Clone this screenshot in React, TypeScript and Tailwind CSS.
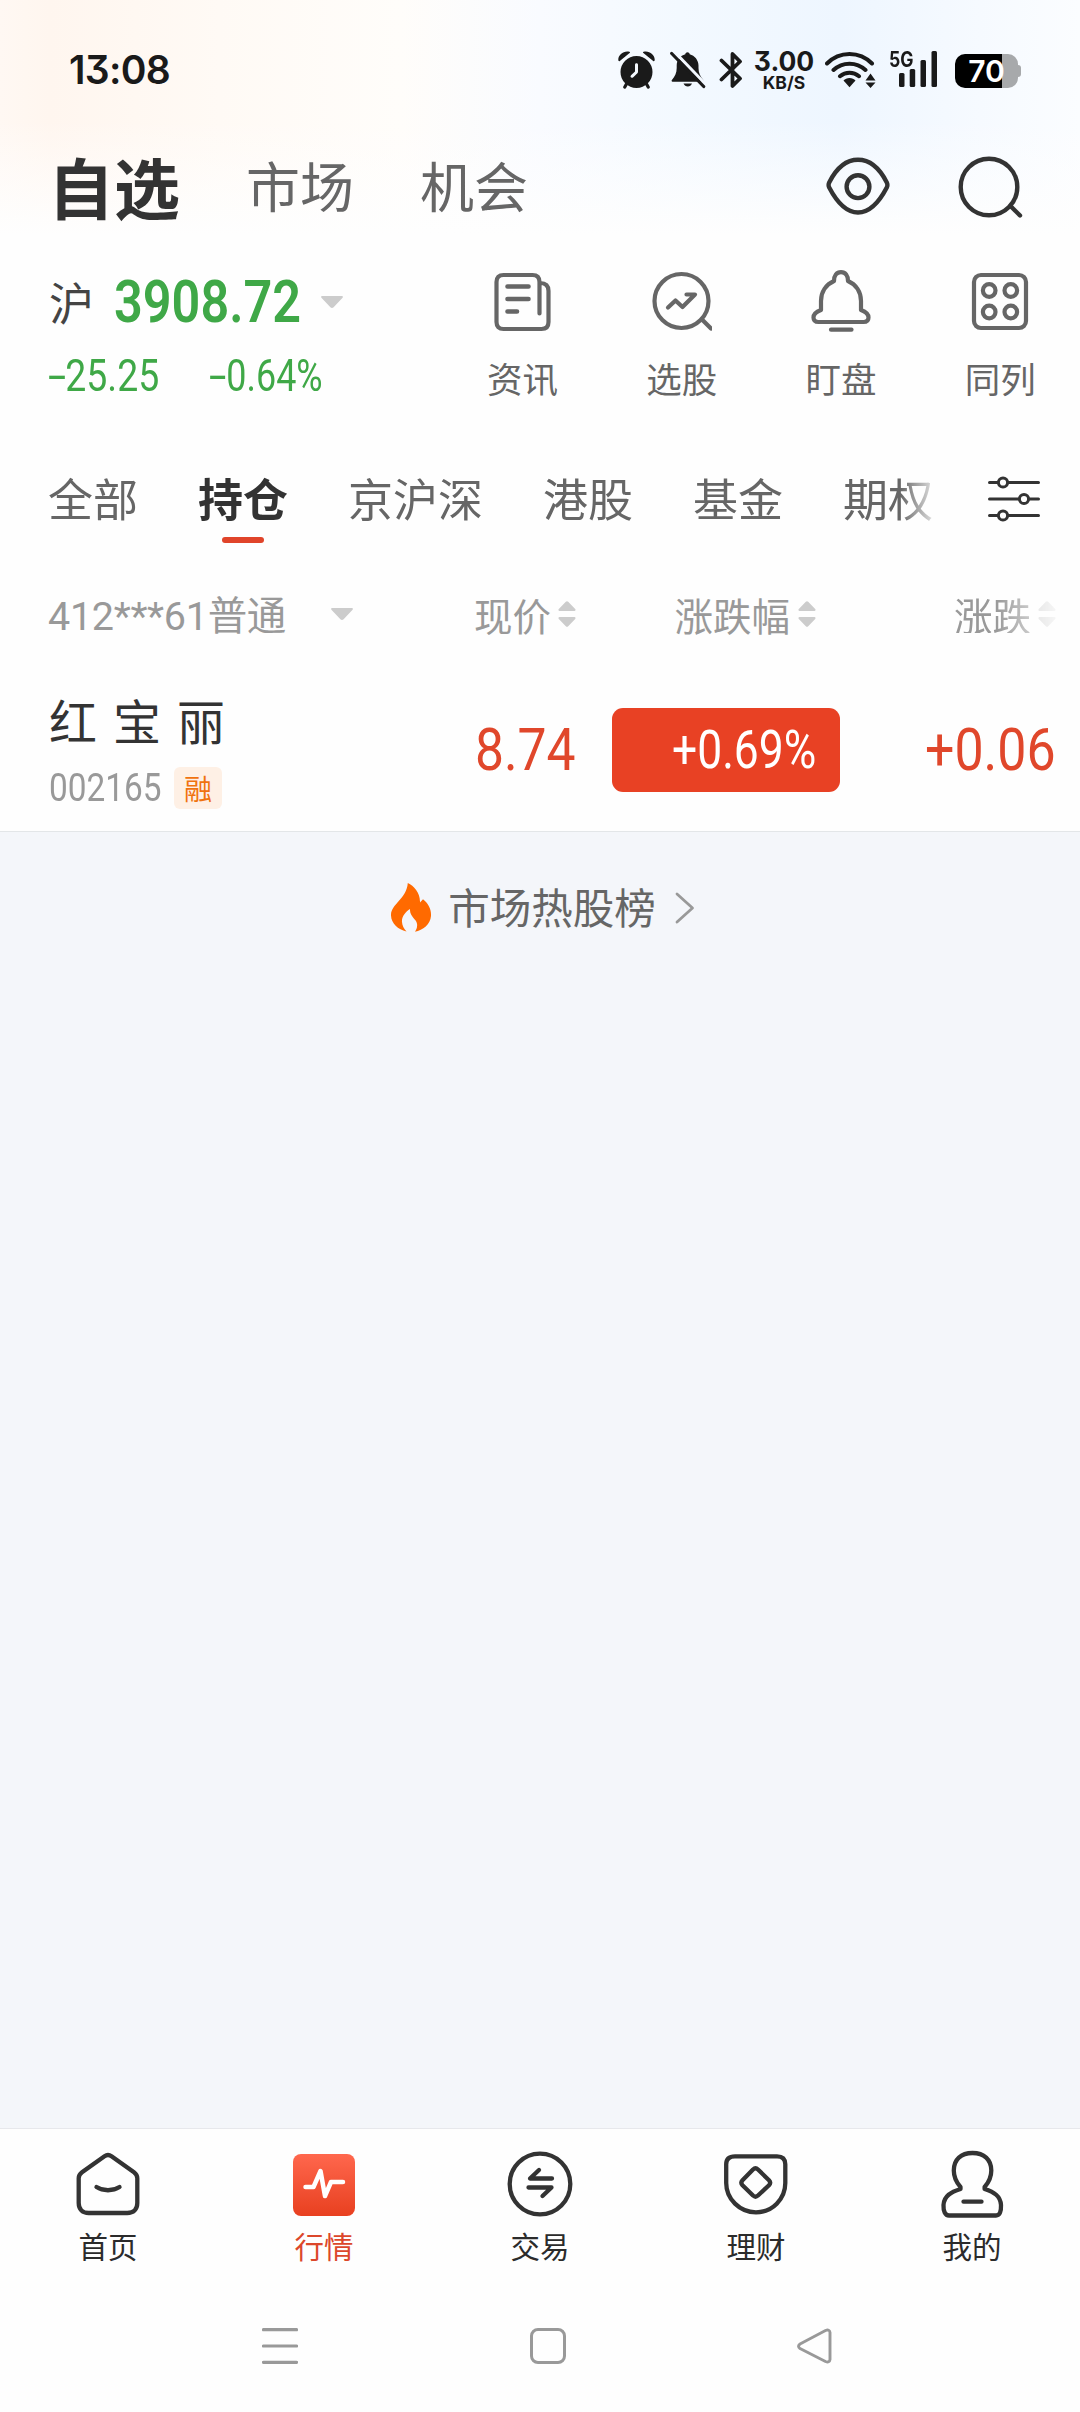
import type { ReactNode } from "react";

/* Narrow numerals: a fixed-width slot with horizontally condensed digits. */
function Num({ slot, text, children }: { slot: string; text: string; children: ReactNode }) {
  return (
    <span className={`block shrink-0 font-[Roboto,sans-serif] whitespace-nowrap leading-none ${slot}`}>
      <span className={`inline-block origin-left ${text}`}>{children}</span>
    </span>
  );
}

function Caret() {
  return (
    <svg width="22" height="12" viewBox="0 0 22 12" fill="#ccc">
      <path d="M1.2 0h19.6c1 0 1.4 1 .8 1.700l-9 9.500c-.9 1-2.300 1-3.200 0l-9-9.500C-.2 1 .2 0 1.200 0z" />
    </svg>
  );
}

function Sort() {
  return (
    <svg width="18" height="26" viewBox="0 0 18 26" fill="#ccc">
      <path d="M1.500 10h15c1 0 1.400-1.200.7-1.900l-7-7.300c-.7-.7-1.700-.7-2.400 0l-7 7.300C.1 8.800.5 10 1.500 10z" />
      <path d="M1.500 16h15c1 0 1.400 1.200.7 1.900l-7 7.300c-.7.7-1.700.7-2.400 0l-7-7.300c-.7-.7-.3-1.900.7-1.900z" />
    </svg>
  );
}

function StatusBar() {
  return (
    <div className="flex h-[120px] items-start pt-[50px] text-[#1a1a1a]">
      <div className="ml-[69px] w-[549px] font-[Inter,sans-serif] text-[39px] leading-[39px] font-semibold tracking-[-0.7px] [font-feature-settings:'cv09']">
        13:08
      </div>
      <svg className="mt-px" width="38" height="38" viewBox="0 0 38 38" fill="#1a1a1a">
        <path fillRule="evenodd" d="M18.500 5a16 16 0 1 1 0 32 16 16 0 0 1 0-32zm0 7.300c-1 0-1.500.6-1.500 1.500v6.700l-4 3.700c-1.400 1.500.5 3.500 2 2.200l4.400-4.200c.5-.5.6-.8.6-1.400v-7c0-.9-.6-1.500-1.500-1.500z" />
        <path d="M.4 9.500C-.6 4.500 5.500-.8 11.400.8c.8.200.8.900.2 1.300L1.800 9.900c-.6.4-1.200.3-1.400-.4zM36.600 9.500c1-5-5.100-10.300-11-8.700-.8.200-.8.900-.2 1.300l9.800 7.800c.6.400 1.200.3 1.400-.4z" />
        <path d="M9 32l-2.200 4M28 32l2.200 4" stroke="#1a1a1a" strokeWidth="3.200" strokeLinecap="round" />
      </svg>
      <svg className="mt-px ml-[14px]" width="36" height="38" viewBox="0 0 36 38">
        <path
          fill="#1a1a1a"
          d="M2.500 30.700c-.9 0-1.200-1-.6-1.700C5 25.500 6.700 22 6.700 17v-2.500c0-5.500 3.700-10 8.600-11.300C15.600 2 16.400 1.300 17.500 1.300s1.900.7 2.200 1.900c4.900 1.300 8.800 5.800 8.800 11.300V17c0 5 1.700 8.500 4.800 12 .6.7.3 1.700-.6 1.700z"
        />
        <path fill="#1a1a1a" d="M13.500 32.500h8.500c-.8 2-2.300 3-4.200 3s-3.500-1-4.300-3z" />
        <path d="M4.300 0.700L36 33.700" stroke="#f3f8ff" strokeWidth="3.200" />
        <path d="M1.700 2.500l32 33" stroke="#1a1a1a" strokeWidth="3.200" strokeLinecap="round" />
      </svg>
      <svg className="mt-px ml-[13px]" width="26" height="38" viewBox="0 0 26 38" fill="none" stroke="#1a1a1a" strokeWidth="3.800" strokeLinejoin="round" strokeLinecap="round">
        <path d="M2.500 9.500L21 27.500 13.500 35V3L21 10.500 2.500 28.500" />
      </svg>
      <div className="ml-[9px] flex w-[60px] flex-col items-center font-[Inter,sans-serif] leading-none [font-feature-settings:'cv09']">
        <div className="text-[26.500px] leading-[22px] font-bold">3.00</div>
        <div className="mt-[2px] text-[17.500px] leading-[17px] font-bold">KB/S</div>
      </div>
      <svg className="mt-px ml-[11px]" width="51" height="38" viewBox="0 0 51 38" fill="none" stroke="#1a1a1a" strokeWidth="4" strokeLinecap="round">
        <path d="M2 12.500c12.500-12.700 32.500-12.700 45 0M8.500 19c9-8.500 23-8.500 32 0M15 25.200c5.500-4.700 13.500-4.700 19 0" />
        <path d="M24.500 27c2.500 0 4.500 1 6 2.500l-6 6.700-6-6.700c1.500-1.500 3.500-2.500 6-2.500z" fill="#1a1a1a" stroke="none" />
        <path d="M45.500 22.500l5 7H40.500zM45.500 37l-5-5.500h10z" fill="#1a1a1a" stroke="none" />
      </svg>
      <div className="ml-[13px] w-[50px]">
        <div className="flex h-[38px] items-end pl-[10px] pb-px">
          <svg className="mt-px" width="39" height="36" viewBox="0 0 39 36" fill="#1a1a1a">
            <rect x="0" y="22" width="5.500" height="14" rx="1.500" />
            <rect x="10.700" y="18" width="5.500" height="18" rx="1.500" />
            <rect x="21.500" y="9" width="5.500" height="27" rx="1.500" />
            <rect x="32.500" y="0" width="5.500" height="36" rx="1.500" />
          </svg>
        </div>
        <div className="-mt-[38px] h-[38px] origin-left scale-x-[0.84] pt-px font-[Inter,sans-serif] text-[21px] leading-[17px] font-bold">5G</div>
      </div>
      <div className="mt-[4px] ml-[16px] flex items-center">
        <div className="flex h-[34px] w-[63px] items-center justify-center rounded-[10px] bg-[linear-gradient(to_right,#000_0,#000_47px,#a7a9ab_47px)] font-[Inter,sans-serif] text-[30px] leading-none font-semibold text-white">
          70
        </div>
        <div className="h-[12px] w-[3px] rounded-r-[3px] bg-[#a7a9ab]" />
      </div>
    </div>
  );
}

function Header() {
  return (
    <div className="flex h-[133px] items-center pl-[48px]">
      <div className="flex h-[133px] w-[778px] items-center gap-[66px] pb-[3px] text-[54px] leading-none text-[#666]">
        <span className="text-[66px] font-bold text-[#333]">自选</span>
        <span>市场</span>
        <span>机会</span>
      </div>
      <svg width="64" height="60" viewBox="0 0 64 60" fill="none" stroke="#333" strokeWidth="4.400">
        <path d="M3.200 25.500C10 12 19.500 2.800 32 2.800S54 12 60.800 25.500c.9 1.900.9 3.200 0 5C54 43.500 44.500 55.500 32 55.500S10 43.500 3.200 30.500c-.9-1.800-.9-3.100 0-5z" />
        <circle cx="32" cy="29.700" r="11.400" />
      </svg>
      <svg className="ml-[67px]" width="66" height="62" viewBox="0 0 66 62" fill="none" stroke="#333" strokeWidth="4.400" strokeLinecap="round">
        <circle cx="32" cy="31" r="28.300" />
        <path d="M53.500 50l9.500 9.500" />
      </svg>
    </div>
  );
}

const quick: { label: string; icon: ReactNode }[] = [
  {
    label: "资讯",
    icon: (
      <>
        <path d="M47 13c6 0 8.500 3 8.500 8v31c0 4.500-2.500 7-7 7H10.500c-4.500 0-7-2.500-7-7V12c0-4.500 2.500-7 7-7h29c4.500 0 7 2.500 7 7v31.500" />
        <path d="M14.500 16.500h21M14.500 29h21M14.500 41.500h9.500" strokeWidth="4.600" />
      </>
    ),
  },
  {
    label: "选股",
    icon: (
      <>
        <circle cx="29.500" cy="31" r="27" />
        <path d="M50 49.500l9 9" />
        <path d="M16 37.500l7.500-7 7 6.500 12.500-12.500H34.500" strokeLinejoin="round" />
      </>
    ),
  },
  {
    label: "盯盘",
    icon: (
      <>
        <path d="M23 11c0-5.500 2.500-8.800 7-8.800s7 3.300 7 8.800c8 3.500 13 11 13 20v9c5 1.800 7.500 4.500 7.500 7.500s-2 4.500-5 4.500h-45c-3 0-5-1.500-5-4.500s2.500-5.700 7.500-7.500v-9c0-9 5-16.500 13-20z" strokeLinejoin="round" />
        <path d="M20 59.700h20.500" />
      </>
    ),
  },
  {
    label: "同列",
    icon: (
      <>
        <rect x="4" y="5" width="52" height="53" rx="7" />
        <circle cx="19.200" cy="20.500" r="6.300" />
        <circle cx="40.800" cy="20.500" r="6.300" />
        <circle cx="19.200" cy="42" r="6.300" />
        <circle cx="40.800" cy="42" r="6.300" />
      </>
    ),
  },
];

function IndexBar() {
  return (
    <div className="flex h-[186px]">
      <div className="w-[443px] shrink-0 pl-[49px]">
        <div className="flex h-[98px] items-center">
          <span className="w-[65px] pb-[2px] text-[45px] leading-none text-[#444]">沪</span>
          <Num slot="w-[207px] text-[60px] text-[#3fa847] font-semibold" text="scale-x-[0.84]">3908.72</Num>
          <Caret />
        </div>
        <div className="-ml-px mt-[4px] flex items-center text-[#3fa847]">
          <Num slot="w-[161px] text-[43.500px] font-[450]" text="scale-x-[0.86]">
            <span className="mr-[8px] inline-block origin-left scale-x-[1.75]">-</span>25.25
          </Num>
          <Num slot="w-[130px] text-[43.500px] font-[450]" text="scale-x-[0.825]">
            <span className="mr-[9px] inline-block origin-left scale-x-[1.75]">-</span>0.64%
          </Num>
        </div>
      </div>
      <div className="grid w-[637px] grid-cols-4">
        {quick.map((q) => (
          <div key={q.label} className="flex flex-col items-center pt-[17px]">
            <svg width="60" height="64" viewBox="0 0 60 64" fill="none" stroke="#666" strokeWidth="4.200" strokeLinecap="round">
              {q.icon}
            </svg>
            <span className="mt-[26px] text-[35.500px] leading-none text-[#666]">{q.label}</span>
          </div>
        ))}
      </div>
    </div>
  );
}

function Tabs() {
  const tabs = ["全部", "持仓", "京沪深", "港股", "基金", "期权"];
  return (
    <div className="flex h-[120px] items-center">
      <div className="flex h-[120px] w-[940px] shrink-0 items-center gap-[60px] overflow-hidden pb-[2px] pl-[48px] text-[45px] leading-[60px] whitespace-nowrap text-[#666] [mask-image:linear-gradient(to_right,#000_900px,transparent_942px)]">
        {tabs.map((t) =>
          t === "持仓" ? (
            <span key={t} className="relative font-bold text-[#333]">
              {t}
              <i className="absolute top-[69px] left-[24px] h-[6px] w-[42px] rounded-full bg-[#e0442a]" />
            </span>
          ) : (
            <span key={t}>{t}</span>
          ),
        )}
      </div>
      <svg className="ml-[48px]" width="52" height="48" viewBox="0 0 52 48" fill="#fefefe" stroke="#333" strokeWidth="3" strokeLinecap="round">
        <path d="M1.500 7.500h49M1.500 24h49M1.500 40.500h49" />
        <circle cx="15" cy="7.500" r="4.600" />
        <circle cx="36" cy="24" r="4.600" />
        <circle cx="15" cy="40.500" r="4.600" />
      </svg>
    </div>
  );
}

function Columns() {
  return (
    <div className="flex h-[107px] items-center pt-[3px] text-[38.500px] leading-none text-[#999]">
      <div className="flex w-[283px] items-center pt-[5px] pl-[48px] whitespace-nowrap">
        <span className="font-[Roboto,'Noto_Sans_CJK_SC',sans-serif] text-[39.500px] tracking-[-0.3px]">412***61普通</span>
      </div>
      <div className="ml-[48px]"><Caret /></div>
      <div className="flex w-[223px] items-center justify-end gap-[7px]">现价<Sort /></div>
      <div className="flex w-[240px] items-center justify-end gap-[8px]">涨跌幅<Sort /></div>
      <div className="flex w-[240px] items-center justify-end gap-[7px] [mask-image:linear-gradient(to_right,#000_180px,transparent_252px)]">
        涨跌<Sort />
      </div>
    </div>
  );
}

function StockRow() {
  return (
    <div className="flex h-[166px] items-center border-b border-[#e3e6e8] pt-[2px]">
      <div className="w-[475px] pt-[2px] pl-[49px]">
        <div className="text-[48px] leading-[54px] tracking-[16px] text-[#333]">红宝丽</div>
        <div className="mt-[21px] flex items-center">
          <Num slot="w-[125px] text-[39.500px] text-[#999]" text="scale-x-[0.845]">002165</Num>
          <span className="flex h-[42px] w-[48px] items-center justify-center rounded-[6px] bg-[#fef0e5] pb-px text-[28px] leading-none text-[#f0730f]">融</span>
        </div>
      </div>
      <Num slot="w-[137px] text-[60px] font-[450] text-[#e0472b]" text="scale-x-[0.86]">8.74</Num>
      <div className="flex h-[84px] w-[228px] items-center rounded-[11px] bg-[#e84124] pl-[60px] text-white">
        <Num slot="w-[150px] text-[53.500px] font-[450]" text="scale-x-[0.83]">+0.69%</Num>
      </div>
      <Num slot="ml-[85px] w-[130px] text-[60px] font-[450] text-[#e0472b]" text="scale-x-[0.865]">+0.06</Num>
    </div>
  );
}

function HotList() {
  return (
    <div className="flex flex-1 justify-center bg-[#f4f6fa] pt-[50px] pl-[6px]">
      <div className="flex h-[52px] items-center">
        <svg className="mb-px" width="41" height="49" viewBox="0 0 41 49" fill="#ff6a00">
          <path d="M16.800 0C23 3 29.300 9.500 29 19.500l3-3.300C37 20 40.500 26 40 33c-.6 8-8 14.500-16 15.700 1.500-2.500 2.500-4.500 2-8-.6-4.700-7.500-7-7-14.700-4.500 3-8.500 7.500-8 13 .2 3.500 1.800 6.800 4.500 9.500C7 46.500.3 40.500 0 32.500-.3 21 15.500 16.500 16.800 0z" />
        </svg>
        <span className="ml-[16px] pb-[2px] text-[41.500px] leading-none text-[#666]">市场热股榜</span>
        <svg className="ml-[19px]" width="20" height="32" viewBox="0 0 20 32" fill="none" stroke="#999" strokeWidth="2.800" strokeLinecap="round" strokeLinejoin="round">
          <path d="M2 2l15.500 14L2 30" />
        </svg>
      </div>
    </div>
  );
}

const nav: { label: string; icon: ReactNode }[] = [
  {
    label: "首页",
    icon: (
      <>
        <path d="M30.500 8.300c2.300-1.700 4.700-1.700 7 0l22.500 16c2.300 1.700 3.300 3.500 3.300 6V55c0 6.500-4 10-10 10H14.700c-6 0-10-3.500-10-10V30.300c0-2.500 1-4.300 3.300-6z" />
        <path d="M22.500 39c6.500 4.300 16.500 4.300 23 0" />
      </>
    ),
  },
  {
    label: "行情",
    icon: (
      <>
        <defs>
          <linearGradient id="pulse" x1="0" y1="0" x2="0" y2="1">
            <stop offset="0" stopColor="#ff674d" />
            <stop offset="1" stopColor="#e84020" />
          </linearGradient>
        </defs>
        <rect x="3" y="6" width="62" height="62" rx="8" fill="url(#pulse)" stroke="none" />
        <path d="M15.500 39h8L30.500 23l4.500 25 6-14h12" stroke="#fff" strokeWidth="4.500" />
      </>
    ),
  },
  {
    label: "交易",
    icon: (
      <>
        <circle cx="34" cy="36" r="30.300" />
        <path d="M46 30.500H24l9-8.500M22.500 39.500H45.500l-9 8.500" />
      </>
    ),
  },
  {
    label: "理财",
    icon: (
      <>
        <path d="M13 8.300h42c6 0 8.300 3 8.300 8V35c0 16-13 29.300-29.300 29.300S4.200 51 4.200 35V16.300c0-5 2.800-8 8.800-8z" />
        <path d="M31 21.500q2.500-2.300 5 0l11 10.700q2.300 2.500 0 5L36 47.500q-2.500 2.300-5 0L20.500 37.200q-2.300-2.500 0-5z" />
      </>
    ),
  },
  {
    label: "我的",
    icon: (
      <>
        <path d="M22.500 39c-4-4.500-6.700-10-6.700-16.500C15.800 11.500 23 5 34.500 5s18.800 6.500 18.800 17.500c0 6.500-2.700 12-6.700 16.500v2C56 44 62.500 48 63 57c.2 6-1 10.500-5 10.500H11c-4 0-5.700-4.500-5.500-10.500C6 48 13 44 22.500 41z" />
        <path d="M25.500 53.700h18" />
      </>
    ),
  },
];

function BottomNav() {
  return (
    <div className="border-t border-[#e7e8ec] bg-[#fefefe]">
      <div className="grid h-[158px] grid-cols-5">
        {nav.map((n) => (
          <div key={n.label} className="flex flex-col items-center pt-[19px]">
            <svg width="68" height="72" viewBox="0 0 68 72" fill="none" stroke="#333" strokeWidth="4.300" strokeLinecap="round" strokeLinejoin="round">
              {n.icon}
            </svg>
            <span className={n.label === "行情" ? "mt-[11px] text-[29.500px] leading-none text-[#dc472b]" : "mt-[11px] text-[29.500px] leading-none text-[#2b2b2b]"}>
              {n.label}
            </span>
          </div>
        ))}
      </div>
      <div className="flex h-[125px] items-start pt-[41px]">
        <svg className="ml-[262px]" width="36" height="36" viewBox="0 0 36 36" stroke="#999" strokeWidth="3.200" strokeLinecap="round">
          <path d="M1.500 1.700h33M1.500 18h33M1.500 34.300h33" />
        </svg>
        <div className="ml-[232px] h-[36px] w-[36px] rounded-[8px] border-3 border-[#999]" />
        <svg className="ml-[231px]" width="36" height="36" viewBox="0 0 36 36" fill="none" stroke="#999" strokeWidth="2.900" strokeLinejoin="round">
          <path d="M3 16L28.500 2.500Q32.500 1 33 4.500v27q-.5 3.500-4.500 2L3 20.500Q0 18.300 3 16z" />
        </svg>
      </div>
    </div>
  );
}

export default function App() {
  return (
    <div className="flex h-[2412px] w-[1080px] flex-col overflow-hidden bg-[#fefefe] bg-[linear-gradient(to_bottom,transparent_120px,#fefefe_235px),linear-gradient(to_right,#fff8f3_0,#fff6ef_50px,#fffaf5_220px,#fffdfa_400px,#f9fbff_540px,#f3f9ff_680px,#eef6ff_840px,#f6faff_980px,#fbfdff_1080px)] bg-[length:1080px_260px] bg-no-repeat font-['Noto_Sans_CJK_SC',sans-serif]">
      <StatusBar />
      <Header />
      <IndexBar />
      <Tabs />
      <Columns />
      <StockRow />
      <HotList />
      <BottomNav />
    </div>
  );
}
